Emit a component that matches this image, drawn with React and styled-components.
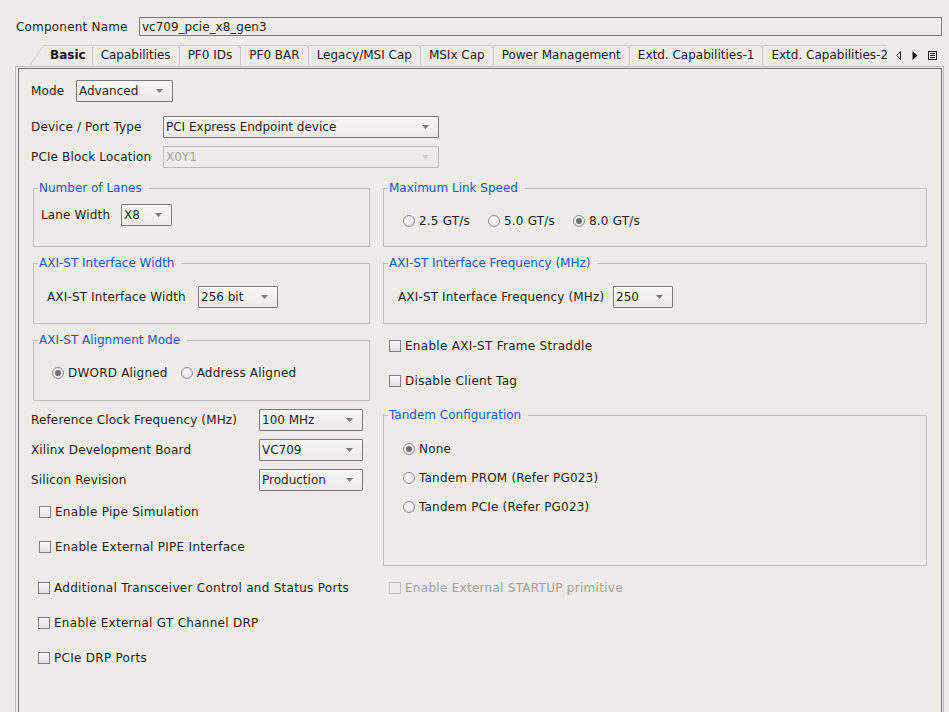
import React from 'react';
import styled, { createGlobalStyle } from 'styled-components';

const BG = '#edece9';

const Global = createGlobalStyle`
  html, body { margin: 0; padding: 0; background: ${BG}; }
  body {
    font-family: "DejaVu Sans", "Liberation Sans", sans-serif;
    font-size: 12px;
    color: #1f1f1f;
  }
`;

const Page = styled.div`
  width: 949px;
  height: 712px;
  overflow: hidden;
  box-sizing: border-box;
  padding-top: 17px;
  background: ${BG};
  display: flex;
  flex-direction: column;
`;

const NameRow = styled.div`
  display: flex;
  align-items: center;
  height: 19px;
  padding-left: 16px;
`;

const NameLabel = styled.span`
  width: 123px;
  flex: none;
  white-space: nowrap;
  letter-spacing: 0.2px;
`;

const NameInput = styled.div`
  width: 803px;
  height: 19px;
  box-sizing: border-box;
  border: 1px solid #7b7b7b;
  padding-left: 2px;
  display: flex;
  align-items: center;
  white-space: nowrap;
`;

const TabBar = styled.div`
  display: flex;
  align-items: stretch;
  height: 20px;
  margin-top: 9px;
`;

const TabStrip = styled.div`
  display: flex;
  width: 887px;
  padding-left: 30px;
  box-sizing: border-box;
  overflow: hidden;
  flex: none;
`;

const Tab = styled.div`
  flex: none;
  box-sizing: border-box;
  height: 20px;
  display: flex;
  align-items: center;
  padding: 0 8px 1px;
  border-top: 1px solid #c9c9c7;
  border-right: 1px solid #c9c9c7;
  border-top-right-radius: 3px;
  color: #24192f;
  white-space: nowrap;
`;

const ActiveTab = styled.div`
  flex: none;
  position: relative;
  box-sizing: border-box;
  height: 20px;
  display: flex;
  align-items: center;
  padding: 0 6px 1px 20px;
  border-right: 1px solid #c9c9c7;
  border-top-right-radius: 3px;
  font-weight: bold;
  color: #1a0f14;
  white-space: nowrap;
  &::before {
    content: '';
    position: absolute;
    left: 0;
    top: 0;
    width: 14px;
    height: 20px;
    background: linear-gradient(to top left, transparent calc(50% - 0.7px), #c3c3c1 50%, transparent calc(50% + 0.7px));
  }
  &::after {
    content: '';
    position: absolute;
    left: 13px;
    right: 0;
    top: 0;
    height: 1px;
    background: #c9c9c7;
  }
`;

const TabNav = styled.div`
  display: flex;
  align-items: center;
  gap: 10px;
  margin-left: 9px;
`;

const Panel = styled.div`
  margin-left: 15px;
  margin-top: 1px;
  width: 929px;
  flex: 1;
  box-sizing: border-box;
  border: 1px solid #b9b9b7;
  border-bottom: none;
  padding: 1px 1px 0 2px;
  display: flex;
`;

const PanelInner = styled.div`
  flex: 1;
  border: 1px solid #6f6f6f;
  border-bottom: none;
  padding: 11px 0 0 12px;
`;

const Row = styled.div`
  display: flex;
  align-items: center;
  height: ${p => p.$h || 22}px;
  margin-top: ${p => p.$mt || 0}px;
  margin-left: ${p => p.$ml || 0}px;
  gap: ${p => p.$gap || 0}px;
`;

const Label = styled.span`
  width: ${p => p.$w}px;
  flex: none;
  white-space: nowrap;
  letter-spacing: 0.15px;
`;

const SelectBox = styled.div`
  position: relative;
  box-sizing: border-box;
  width: ${p => p.$w}px;
  height: 22px;
  flex: none;
  border: 1px solid ${p => (p.$disabled ? '#bdbdbb' : '#7a7a7a')};
  border-radius: 1px;
  background: ${p => (p.$disabled ? BG : 'linear-gradient(#f7f7f5, #ebeae7)')};
  color: ${p => (p.$disabled ? '#a3a3a3' : '#1f1f1f')};
  padding-left: 2px;
  display: flex;
  align-items: center;
  white-space: nowrap;
  svg {
    position: absolute;
    right: 9px;
    top: 8px;
  }
`;

const Grid = styled.div`
  display: grid;
  grid-template-columns: 339px 544px;
  column-gap: 13px;
  margin-top: 20px;
  align-items: start;
`;

const Cell = styled.div`
  display: flex;
  flex-direction: column;
  margin-top: ${p => p.$mt || 0}px;
  margin-left: ${p => p.$ml || 0}px;
`;

const GroupBox = styled.div`
  position: relative;
  box-sizing: border-box;
  border: 1px solid #bfbfbd;
  height: ${p => p.$h}px;
  padding: ${p => p.$pad};
  margin-top: ${p => p.$mt || 0}px;
  margin-left: ${p => p.$ml || 0}px;
`;

const GroupTitle = styled.span`
  position: absolute;
  top: -8px;
  left: 4px;
  padding: 0 7px 0 1px;
  line-height: 15px;
  background: ${BG};
  color: #1557d6;
  white-space: nowrap;
`;

const RadioItem = styled.label`
  display: flex;
  align-items: center;
  gap: 4px;
  white-space: nowrap;
  letter-spacing: 0.2px;
`;

const RadioCircle = styled.span`
  box-sizing: border-box;
  width: 12px;
  height: 12px;
  border-radius: 50%;
  border: 1px solid #8c8c8c;
  background: radial-gradient(circle at 40% 35%, #fbfbfb, #dcdcda);
  display: flex;
  align-items: center;
  justify-content: center;
  &::after {
    content: '';
    width: 6px;
    height: 6px;
    border-radius: 50%;
    background: ${p => (p.$on ? '#6e6e6e' : 'transparent')};
  }
`;

const CheckItem = styled.label`
  display: flex;
  align-items: center;
  height: 16px;
  margin-top: ${p => p.$mt || 0}px;
  margin-left: ${p => p.$ml || 0}px;
  color: ${p => (p.$disabled ? '#a0a0a0' : '#1f1f1f')};
  white-space: nowrap;
  letter-spacing: 0.28px;
`;

const CheckSquare = styled.span`
  box-sizing: border-box;
  width: 12px;
  height: 12px;
  margin-right: 4px;
  flex: none;
  border: 1px solid ${p => (p.$disabled ? '#c0c0be' : '#7f7f7f')};
  background: ${p => (p.$disabled ? BG : 'linear-gradient(#f8f8f7, #e2e2e0)')};
`;

const Arrow = ({ disabled }) => (
  <svg width="7" height="4" viewBox="0 0 7 4">
    <path d="M0 0 L7 0 L3.5 4 Z" fill={disabled ? '#cdcdcb' : '#7c7c7c'} />
  </svg>
);

const Select = ({ w, value, disabled }) => (
  <SelectBox $w={w} $disabled={disabled}>
    {value}
    <Arrow disabled={disabled} />
  </SelectBox>
);

const Radio = ({ on, children }) => (
  <RadioItem>
    <RadioCircle $on={on} />
    {children}
  </RadioItem>
);

const Check = ({ children, ml, mt, disabled }) => (
  <CheckItem $ml={ml} $mt={mt} $disabled={disabled}>
    <CheckSquare $disabled={disabled} />
    {children}
  </CheckItem>
);

const tabs = [
  'Capabilities',
  'PF0 IDs',
  'PF0 BAR',
  'Legacy/MSI Cap',
  'MSIx Cap',
  'Power Management',
  'Extd. Capabilities-1',
  'Extd. Capabilities-2',
];

export default function App() {
  return (
    <>
      <Global />
      <Page>
        <NameRow>
          <NameLabel>Component Name</NameLabel>
          <NameInput>vc709_pcie_x8_gen3</NameInput>
        </NameRow>

        <TabBar>
          <TabStrip>
            <ActiveTab>Basic</ActiveTab>
            {tabs.map(t => (
              <Tab key={t}>{t}</Tab>
            ))}
          </TabStrip>
          <TabNav>
            <svg width="6" height="9" viewBox="0 0 6 9">
              <path d="M4.5 0.5 L0.8 4.5 L4.5 8.5 Z" fill="none" stroke="#222" strokeWidth="1" />
            </svg>
            <svg width="6" height="9" viewBox="0 0 6 9">
              <path d="M0.5 0 L5.5 4.5 L0.5 9 Z" fill="#111" />
            </svg>
            <svg width="9" height="9" viewBox="0 0 9 9">
              <rect x="0.5" y="0.5" width="8" height="8" fill="none" stroke="#222" />
              <path d="M2 2.5 H7 M2 4.5 H7 M2 6.5 H7" stroke="#222" strokeWidth="1" />
            </svg>
          </TabNav>
        </TabBar>

        <Panel>
          <PanelInner>
            <Row>
              <Label $w={45}>Mode</Label>
              <Select w={97} value="Advanced" />
            </Row>
            <Row $mt={14}>
              <Label $w={132}>Device / Port Type</Label>
              <Select w={276} value="PCI Express Endpoint device" />
            </Row>
            <Row $mt={8}>
              <Label $w={132}>PCIe Block Location</Label>
              <Select w={276} value="X0Y1" disabled />
            </Row>

            <Grid>
              <GroupBox $ml={2} $h={59} $pad="15px 0 0 7px">
                <GroupTitle>Number of Lanes</GroupTitle>
                <Row>
                  <Label $w={80}>Lane Width</Label>
                  <Select w={51} value="X8" />
                </Row>
              </GroupBox>
              <GroupBox $h={59} $pad="24px 0 0 19px">
                <GroupTitle>Maximum Link Speed</GroupTitle>
                <Row $h={16} $gap={18}>
                  <Radio>2.5 GT/s</Radio>
                  <Radio>5.0 GT/s</Radio>
                  <Radio on>8.0 GT/s</Radio>
                </Row>
              </GroupBox>

              <GroupBox $ml={2} $mt={16} $h={61} $pad="22px 0 0 13px">
                <GroupTitle>AXI-ST Interface Width</GroupTitle>
                <Row>
                  <Label $w={151}>AXI-ST Interface Width</Label>
                  <Select w={80} value="256 bit" />
                </Row>
              </GroupBox>
              <GroupBox $mt={16} $h={61} $pad="22px 0 0 14px">
                <GroupTitle>AXI-ST Interface Frequency (MHz)</GroupTitle>
                <Row>
                  <Label $w={215}>AXI-ST Interface Frequency (MHz)</Label>
                  <Select w={60} value="250" />
                </Row>
              </GroupBox>

              <GroupBox $ml={2} $mt={16} $h={61} $pad="24px 0 0 18px">
                <GroupTitle>AXI-ST Alignment Mode</GroupTitle>
                <Row $h={16} $gap={13}>
                  <Radio on>DWORD Aligned</Radio>
                  <Radio>Address Aligned</Radio>
                </Row>
              </GroupBox>
              <Cell $mt={14}>
                <Check ml={6}>Enable AXI-ST Frame Straddle</Check>
                <Check ml={6} mt={19}>Disable Client Tag</Check>
              </Cell>

              <Cell $mt={8}>
                <Row>
                  <Label $w={228}>Reference Clock Frequency (MHz)</Label>
                  <Select w={104} value="100 MHz" />
                </Row>
                <Row $mt={8}>
                  <Label $w={228}>Xilinx Development Board</Label>
                  <Select w={104} value="VC709" />
                </Row>
                <Row $mt={8}>
                  <Label $w={228}>Silicon Revision</Label>
                  <Select w={104} value="Production" />
                </Row>
                <Check ml={8} mt={13}>Enable Pipe Simulation</Check>
                <Check ml={8} mt={19}>Enable External PIPE Interface</Check>
              </Cell>
              <GroupBox $mt={14} $h={151} $pad="25px 0 0 19px">
                <GroupTitle>Tandem Configuration</GroupTitle>
                <Row $h={16}>
                  <Radio on>None</Radio>
                </Row>
                <Row $h={16} $mt={13}>
                  <Radio>Tandem PROM (Refer PG023)</Radio>
                </Row>
                <Row $h={16} $mt={13}>
                  <Radio>Tandem PCIe (Refer PG023)</Radio>
                </Row>
              </GroupBox>

              <Cell $mt={14}>
                <Check ml={7}>Additional Transceiver Control and Status Ports</Check>
                <Check ml={7} mt={19}>Enable External GT Channel DRP</Check>
                <Check ml={7} mt={19}>PCIe DRP Ports</Check>
              </Cell>
              <Cell $mt={14}>
                <Check ml={6} disabled>Enable External STARTUP primitive</Check>
              </Cell>
            </Grid>
          </PanelInner>
        </Panel>
      </Page>
    </>
  );
}
